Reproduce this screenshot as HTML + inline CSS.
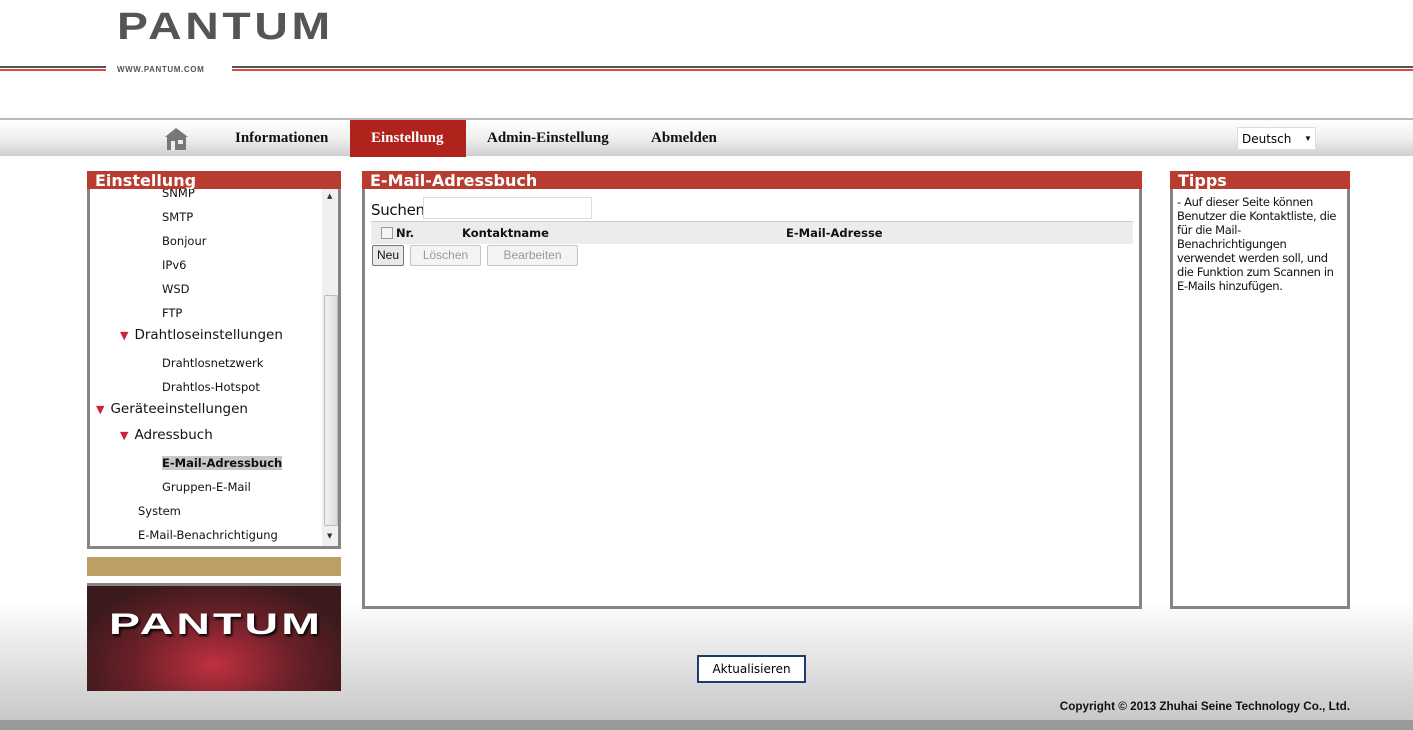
<!DOCTYPE html>
<html><head><meta charset="utf-8"><style>
*{margin:0;padding:0;box-sizing:border-box}
body{width:1413px;height:730px;position:relative;overflow:hidden;font-family:"DejaVu Sans","Liberation Sans",sans-serif;background:linear-gradient(#fff 0,#fff 600px,#c8c8c8 720px);}
.a{position:absolute}
.logo{left:117px;top:6px;font:bold 38px "Liberation Sans",sans-serif;color:#555;letter-spacing:3px;transform:scaleX(1.22);transform-origin:left}
.nav{left:0;top:118px;width:1413px;height:38px;border-top:2px solid #bbb;background:linear-gradient(#fff,#f0f0f0 50%,#cfcfcf)}
.nav span{position:absolute;top:10px;font:bold 15px "Liberation Serif",serif;color:#111}
.hd{height:18px;background:#b83c30;color:#fff;font:bold 16px "DejaVu Sans",sans-serif;padding-left:8px;line-height:20px;overflow:hidden}
.box{border:3px solid #858585;border-top:0;background:#fff}
.it{position:absolute;font-size:11.5px;color:#111;font-family:"DejaVu Sans",sans-serif}
.big{font-size:13.5px}
.tri{color:#d0203c;font-size:11px;margin-right:6px}
.btn{position:absolute;height:21px;border:1px solid #c4c4c4;border-radius:2px;background:#f4f4f4;color:#999;font:12px "Liberation Sans",sans-serif;text-align:center;line-height:19px}
</style></head><body>
<div class="a logo">PANTUM</div>
<div class="a" style="left:0;top:66px;width:106px;height:2px;background:#555"></div>
<div class="a" style="left:0;top:69px;width:106px;height:2px;background:#e04848"></div>
<div class="a" style="left:232px;top:66px;width:1181px;height:2px;background:#555"></div>
<div class="a" style="left:232px;top:69px;width:1181px;height:2px;background:#e04848"></div>
<div class="a" style="left:117px;top:65px;font:bold 8px 'Liberation Sans',sans-serif;color:#555;letter-spacing:0.6px">WWW.PANTUM.COM</div>
<div class="a nav">
<svg class="a" style="left:165px;top:8px" width="23" height="22"><path d="M0 9L11 0L23 9Z" fill="#777"/><rect x="2" y="9" width="19" height="13" fill="#777"/><rect x="6" y="13" width="4" height="9" fill="#eee"/><rect x="13" y="12" width="5" height="4" fill="#eee"/></svg>
<span style="left:235px">Informationen</span>
<div class="a" style="left:350px;top:0;width:116px;height:37px;background:#b0221c"></div>
<span style="left:371px;color:#fff">Einstellung</span>
<span style="left:487px">Admin-Einstellung</span>
<span style="left:651px">Abmelden</span>
<div class="a" style="left:1237px;top:7px;width:79px;height:23px;background:#fff;border:1px solid #ddd;font:12px 'DejaVu Sans',sans-serif;padding:4px 4px">Deutsch<span style="position:absolute;left:66px;top:6px;font-size:8px">▼</span></div>
</div>
<div class="a" style="left:87px;top:171px;width:254px">
<div class="hd">Einstellung</div>
<div class="box" style="height:360px;position:relative;overflow:hidden">
<div class="it" style="left:72px;top:-3px">SNMP</div>
<div class="it" style="left:72px;top:21px">SMTP</div>
<div class="it" style="left:72px;top:45px">Bonjour</div>
<div class="it" style="left:72px;top:69px">IPv6</div>
<div class="it" style="left:72px;top:93px">WSD</div>
<div class="it" style="left:72px;top:117px">FTP</div>
<div class="it big" style="left:30px;top:138px"><span class="tri">▼</span>Drahtloseinstellungen</div>
<div class="it" style="left:72px;top:167px">Drahtlosnetzwerk</div>
<div class="it" style="left:72px;top:191px">Drahtlos-Hotspot</div>
<div class="it big" style="left:6px;top:212px"><span class="tri">▼</span>Geräteeinstellungen</div>
<div class="it big" style="left:30px;top:238px"><span class="tri">▼</span>Adressbuch</div>
<div class="it" style="left:72px;top:267px;background:#c8c8c8;font-weight:bold">E-Mail-Adressbuch</div>
<div class="it" style="left:72px;top:291px">Gruppen-E-Mail</div>
<div class="it" style="left:48px;top:315px">System</div>
<div class="it" style="left:48px;top:339px">E-Mail-Benachrichtigung</div>
<div class="a" style="left:232px;top:0;width:17px;height:357px;background:#f0f0f0"></div>
<div class="a" style="left:234px;top:106px;width:14px;height:231px;background:linear-gradient(90deg,#f2f2f2,#dcdcdc);border:1px solid #bbb;border-radius:2px"></div>
<div class="a" style="left:237px;top:3px;font-size:7px;color:#333">▲</div>
<div class="a" style="left:237px;top:343px;font-size:7px;color:#333">▼</div>
</div></div>
<div class="a" style="left:87px;top:557px;width:254px;height:19px;background:#bd9f63"></div>
<div class="a" style="left:87px;top:583px;width:254px;height:108px;background:radial-gradient(ellipse at 50% 75%,#c03040 0,#6a2028 45%,#3a1a1c 80%),#3a1a1c;border-top:3px solid #888">
<div class="a" style="left:22px;top:22px;font:bold 30px 'Liberation Sans',sans-serif;color:#fff;letter-spacing:2px;transform:scaleX(1.55);transform-origin:left;text-shadow:1px 2px 2px #000">PANTUM</div>
</div>
<div class="a" style="left:362px;top:171px;width:780px">
<div class="hd">E-Mail-Adressbuch</div>
<div class="box" style="height:420px;position:relative">
<div class="a" style="left:6px;top:12px;font:15px 'DejaVu Sans',sans-serif;color:#111;letter-spacing:-0.3px">Suchen</div>
<div class="a" style="left:58px;top:8px;width:169px;height:22px;border:1px solid #ddd"></div>
<div class="a" style="left:6px;top:32px;width:762px;height:23px;background:#ececec;border-top:1px solid #ccc;font:bold 11.5px 'DejaVu Sans',sans-serif;color:#111">
<div class="a" style="left:10px;top:5px;width:12px;height:12px;border:1px solid #999;background:#f4f4f4"></div>
<span class="a" style="left:25px;top:4px">Nr.</span><span class="a" style="left:91px;top:4px">Kontaktname</span><span class="a" style="left:415px;top:4px">E-Mail-Adresse</span></div>
<div class="btn" style="left:7px;top:56px;width:32px;border-color:#777;color:#111;background:#e8e8e8">Neu</div>
<div class="btn" style="left:45px;top:56px;width:71px">Löschen</div>
<div class="btn" style="left:122px;top:56px;width:91px">Bearbeiten</div>
</div></div>
<div class="a" style="left:1170px;top:171px;width:180px">
<div class="hd">Tipps</div>
<div class="box" style="height:420px;padding:6px 4px;font:11.5px 'DejaVu Sans',sans-serif;line-height:14px;color:#111;letter-spacing:-0.35px;white-space:nowrap">- Auf dieser Seite können<br>Benutzer die Kontaktliste, die<br>für die Mail-<br>Benachrichtigungen<br>verwendet werden soll, und<br>die Funktion zum Scannen in<br>E-Mails hinzufügen.</div>
</div>
<div class="a" style="left:697px;top:655px;width:109px;height:28px;border:2px solid #1c3c6c;background:#fff;font:12px 'DejaVu Sans',sans-serif;text-align:center;line-height:24px">Aktualisieren</div>
<div class="a" style="right:63px;top:700px;font:bold 11.7px 'Liberation Sans',sans-serif;color:#111">Copyright © 2013 Zhuhai Seine Technology Co., Ltd.</div>
<div class="a" style="left:0;top:720px;width:1413px;height:10px;background:#999"></div>
</body></html>
